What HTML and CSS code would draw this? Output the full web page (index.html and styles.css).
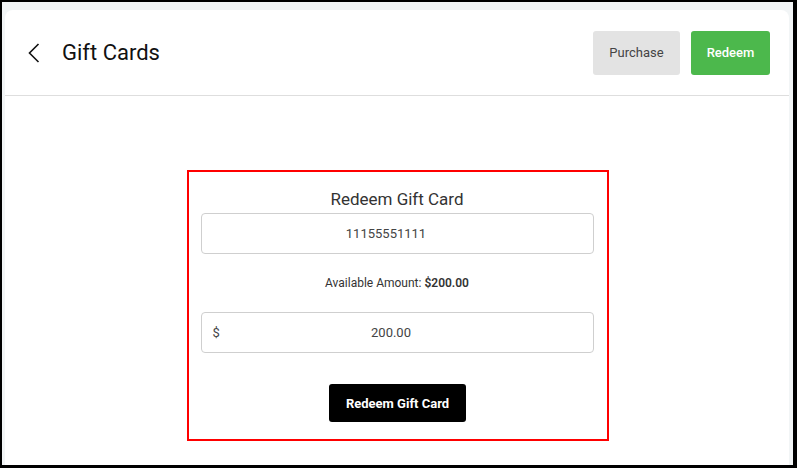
FILE: index.html
```html
<!DOCTYPE html>
<html>
<head>
<meta charset="utf-8">
<link rel="stylesheet" href="styles.css">
</head>
<body>
<div class="screen">
  <div class="card">
    <header class="header">
      <div class="title-wrap">
        <svg class="back" width="12" height="20" viewBox="0 0 12 20"><path d="M10.5 1 L1.5 10 L10.5 19" fill="none" stroke="#111" stroke-width="1.6"/></svg>
        <h1 class="title">Gift Cards</h1>
      </div>
      <div class="actions">
        <button class="btn btn-grey">Purchase</button>
        <button class="btn btn-green">Redeem</button>
      </div>
    </header>
    <main class="main">
      <section class="redeem-box">
        <h2 class="redeem-title">Redeem Gift Card</h2>
        <div class="field"><span class="field-value">11155551111</span></div>
        <p class="available">Available Amount: <b>$200.00</b></p>
        <div class="field field-amount"><span class="prefix">$</span><span class="amount-value">200.00</span></div>
        <div class="submit-row"><button class="btn-black">Redeem Gift Card</button></div>
      </section>
    </main>
  </div>
</div>
</body>
</html>
```
FILE: styles.css
```css
html, body { margin: 0; height: 100%; }
body {
  background: #000;
  padding: 2px 4px 3px 2px;
  box-sizing: border-box;
  font-family: Roboto, "Liberation Sans", sans-serif;
}
.screen {
  background: #f2f5f6;
  height: 100%;
  padding: 8px 4px 0 3px;
  box-sizing: border-box;
  display: flex;
  flex-direction: column;
}
.card {
  background: #fff;
  flex: 1;
  border-radius: 8px 8px 0 0;
  display: flex;
  flex-direction: column;
}
.header {
  height: 85px;
  border-bottom: 1px solid #dedede;
  display: flex;
  align-items: center;
  justify-content: space-between;
  padding: 0 19px 0 23px;
}
.title-wrap { display: flex; align-items: center; }
.back { display: block; margin-top: 1px; }
.title {
  margin: 0 0 0 22px;
  font-size: 22px;
  font-weight: 400;
  color: #111;
}
.actions { display: flex; gap: 11px; }
.btn {
  height: 44px;
  border: none;
  border-radius: 3px;
  font-family: Roboto, "Liberation Sans", sans-serif;
  font-size: 13px;
  padding: 0;
}
.btn-grey { width: 87px; background: #e3e3e3; color: #444; }
.btn-green { width: 79px; background: #4cb84c; color: #fff; font-weight: 500; }
.main {
  flex: 1;
  display: flex;
  justify-content: center;
  align-items: flex-start;
  padding-top: 74px;
}
.redeem-box {
  border: 2px solid #f00;
  padding: 15px 13px 0 12px;
  box-sizing: border-box;
  width: 422px;
  height: 271px;
  margin-left: 1px;
}
.redeem-title {
  margin: 0;
  font-size: 17px;
  line-height: 24px;
  font-weight: 400;
  color: #333;
  text-align: center;
}
.field {
  margin-top: 2px;
  height: 41px;
  border: 1px solid #cfcfcf;
  border-radius: 4px;
  box-sizing: border-box;
  display: flex;
  align-items: center;
  justify-content: center;
  font-size: 13px;
  color: #444;
  padding-right: 22px;
}
.available {
  margin: 21px 0 0;
  font-size: 12px;
  line-height: 16px;
  color: #333;
  text-align: center;
}
.available b { font-weight: 600; }
.field-amount {
  margin-top: 21px;
  justify-content: flex-start;
  padding-left: 11px;
  padding-right: 0;
}
.prefix { width: 8px; color: #444; }
.amount-value { flex: 1; text-align: center; padding-right: 31px; }
.submit-row {
  display: flex;
  justify-content: center;
  margin-top: 31px;
  padding-left: 1px;
}
.btn-black {
  width: 137px;
  height: 38px;
  background: #000;
  color: #fff;
  border: none;
  border-radius: 3px;
  font-family: Roboto, "Liberation Sans", sans-serif;
  font-size: 13px;
  font-weight: 700;
  padding: 0;
}
```
